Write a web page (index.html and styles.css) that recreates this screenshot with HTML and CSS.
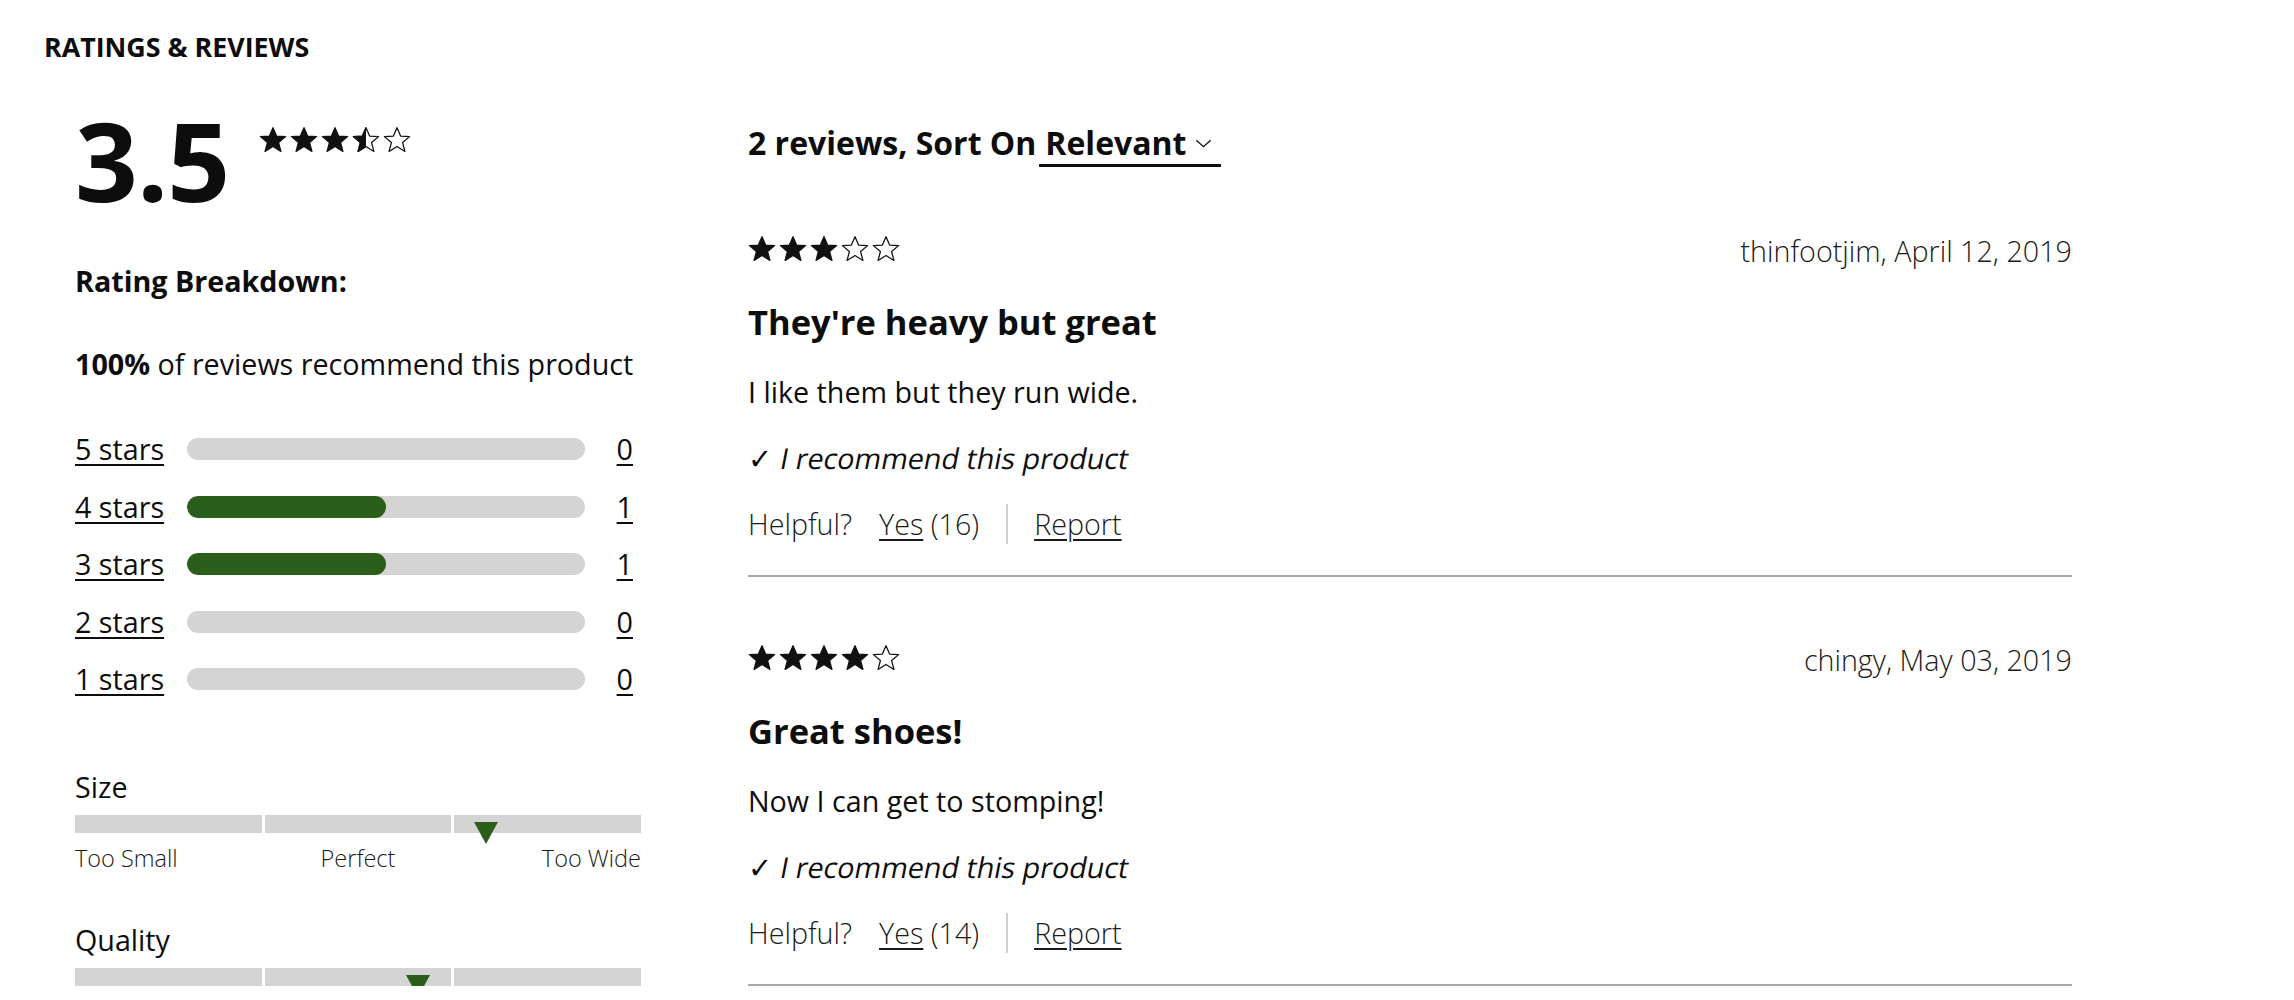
FILE: index.html
```html
<!DOCTYPE html>
<html lang="en">
<head>
<meta charset="utf-8">
<title>Ratings &amp; Reviews</title>
<link rel="stylesheet" href="styles.css">
</head>
<body>
<svg class="defs" width="0" height="0" aria-hidden="true">
  <defs>
    <clipPath id="half-left"><rect x="0" y="0" width="12" height="24"/></clipPath>
    <symbol id="star-full" viewBox="0 0 24 24">
      <polygon points="12,1.4 15.1,8.6 22.8,9.1 16.8,14.2 18.8,21.8 12,17.6 5.2,21.8 7.2,14.2 1.2,9.1 8.9,8.6" fill="#111" stroke="#111" stroke-width="1.1" stroke-linejoin="round"/>
    </symbol>
    <symbol id="star-empty" viewBox="0 0 24 24">
      <polygon points="12,1.4 15.1,8.6 22.8,9.1 16.8,14.2 18.8,21.8 12,17.6 5.2,21.8 7.2,14.2 1.2,9.1 8.9,8.6" fill="#fff" stroke="#111" stroke-width="1.1" stroke-linejoin="round"/>
    </symbol>
    <symbol id="star-half" viewBox="0 0 24 24">
      <polygon points="12,1.4 15.1,8.6 22.8,9.1 16.8,14.2 18.8,21.8 12,17.6 5.2,21.8 7.2,14.2 1.2,9.1 8.9,8.6" fill="#fff" stroke="#111" stroke-width="1.1" stroke-linejoin="round"/>
      <polygon clip-path="url(#half-left)" points="12,1.4 15.1,8.6 22.8,9.1 16.8,14.2 18.8,21.8 12,17.6 5.2,21.8 7.2,14.2 1.2,9.1 8.9,8.6" fill="#111" stroke="#111" stroke-width="1.1" stroke-linejoin="round"/>
    </symbol>
  </defs>
</svg>

<div class="page">
  <h2 class="section-title">RATINGS &amp; REVIEWS</h2>

  <div class="layout">
    <aside class="summary">
      <div class="score-row">
        <div class="score">3.5</div>
        <div class="stars">
          <svg class="star"><use href="#star-full"/></svg>
          <svg class="star"><use href="#star-full"/></svg>
          <svg class="star"><use href="#star-full"/></svg>
          <svg class="star"><use href="#star-half"/></svg>
          <svg class="star"><use href="#star-empty"/></svg>
        </div>
      </div>

      <h3 class="breakdown-title">Rating Breakdown:</h3>
      <p class="recommend-pct"><b>100%</b> of reviews recommend this product</p>

      <div class="dist">
        <div class="dist-row">
          <a class="dist-label" href="#">5 stars</a>
          <div class="track"><div class="fill" style="width:0%"></div></div>
          <a class="dist-count" href="#">0</a>
        </div>
        <div class="dist-row">
          <a class="dist-label" href="#">4 stars</a>
          <div class="track"><div class="fill" style="width:50%"></div></div>
          <a class="dist-count" href="#">1</a>
        </div>
        <div class="dist-row">
          <a class="dist-label" href="#">3 stars</a>
          <div class="track"><div class="fill" style="width:50%"></div></div>
          <a class="dist-count" href="#">1</a>
        </div>
        <div class="dist-row">
          <a class="dist-label" href="#">2 stars</a>
          <div class="track"><div class="fill" style="width:0%"></div></div>
          <a class="dist-count" href="#">0</a>
        </div>
        <div class="dist-row">
          <a class="dist-label" href="#">1 stars</a>
          <div class="track"><div class="fill" style="width:0%"></div></div>
          <a class="dist-count" href="#">0</a>
        </div>
      </div>

      <div class="char">
        <div class="char-name">Size</div>
        <div class="char-bar">
          <span class="seg"></span><span class="seg"></span><span class="seg"></span>
          <i class="marker" style="left:72.6%"></i>
        </div>
        <div class="char-labels"><span>Too Small</span><span>Perfect</span><span>Too Wide</span></div>
      </div>

      <div class="char">
        <div class="char-name">Quality</div>
        <div class="char-bar">
          <span class="seg"></span><span class="seg"></span><span class="seg"></span>
          <i class="marker" style="left:60.6%"></i>
        </div>
      </div>
    </aside>

    <section class="reviews">
      <div class="sort-header">
        <span class="sort-text">2 reviews, Sort On</span>
        <span class="sort-select">Relevant
          <svg class="chevron" viewBox="0 0 18 10"><polyline points="1,1.5 9,8.5 17,1.5" fill="none" stroke="#111" stroke-width="1.5"/></svg>
        </span>
      </div>

      <article class="review">
        <div class="review-top">
          <div class="stars">
            <svg class="star"><use href="#star-full"/></svg>
            <svg class="star"><use href="#star-full"/></svg>
            <svg class="star"><use href="#star-full"/></svg>
            <svg class="star"><use href="#star-empty"/></svg>
            <svg class="star"><use href="#star-empty"/></svg>
          </div>
          <div class="review-meta">thinfootjim, April 12, 2019</div>
        </div>
        <h4 class="review-title">They're heavy but great</h4>
        <p class="review-body">I like them but they run wide.</p>
        <p class="review-rec"><span class="check">✓</span> <span class="slant">I recommend this product</span></p>
        <div class="helpful">
          <span class="helpful-q">Helpful?</span>
          <span class="helpful-yes"><a href="#">Yes</a> (16)</span>
          <span class="helpful-sep"></span>
          <a class="helpful-report" href="#">Report</a>
        </div>
      </article>

      <article class="review">
        <div class="review-top">
          <div class="stars">
            <svg class="star"><use href="#star-full"/></svg>
            <svg class="star"><use href="#star-full"/></svg>
            <svg class="star"><use href="#star-full"/></svg>
            <svg class="star"><use href="#star-full"/></svg>
            <svg class="star"><use href="#star-empty"/></svg>
          </div>
          <div class="review-meta">chingy, May 03, 2019</div>
        </div>
        <h4 class="review-title">Great shoes!</h4>
        <p class="review-body">Now I can get to stomping!</p>
        <p class="review-rec"><span class="check">✓</span> <span class="slant">I recommend this product</span></p>
        <div class="helpful">
          <span class="helpful-q">Helpful?</span>
          <span class="helpful-yes"><a href="#">Yes</a> (14)</span>
          <span class="helpful-sep"></span>
          <a class="helpful-report" href="#">Report</a>
        </div>
      </article>
    </section>
  </div>
</div>
</body>
</html>
```

FILE: styles.css
```css
* { box-sizing: border-box; }

html, body {
  margin: 0;
  padding: 0;
  background: #fff;
}

body {
  font-family: "Open Sans", "Noto Sans", sans-serif;
  font-size: 28.7px;
  color: #0d0d0d;
}

.defs { position: absolute; width: 0; height: 0; overflow: hidden; }

a { color: #0d0d0d; text-decoration: underline; text-underline-offset: 4px; text-decoration-thickness: 2px; }

.page {
  padding: 29px 0 0 44px;
}

.section-title {
  margin: 0;
  font-size: 26.8px;
  line-height: 36px;
  font-weight: 700;
}

.layout {
  display: grid;
  grid-template-columns: 566px 1324px;
  column-gap: 107px;
  padding-left: 31px;
}

/* ---------- summary ---------- */
.score-row {
  display: flex;
  align-items: flex-start;
  margin-top: 39px;
}

.score {
  font-size: 110px;
  line-height: 110px;
  font-weight: 700;
  letter-spacing: -1px;
}

.stars {
  display: flex;
  gap: 3px;
}

.star {
  width: 28px;
  height: 28px;
  display: block;
}

.score-row .stars {
  margin-top: 22px;
  margin-left: 30px;
}

.breakdown-title {
  margin: 47px 0 0;
  font-size: 28.7px;
  line-height: 40px;
  font-weight: 700;
}

.recommend-pct {
  margin: 43px 0 0;
  line-height: 40px;
  font-weight: 400;
}

.recommend-pct b { font-weight: 700; }

.dist {
  margin-top: 45px;
  display: flex;
  flex-direction: column;
  gap: 17.5px;
}

.dist-row {
  display: grid;
  grid-template-columns: 112px 398px 48px;
  align-items: center;
  height: 40px;
}

.dist-label { line-height: 40px; }

.track {
  height: 22px;
  border-radius: 11px;
  background: #d4d4d4;
  overflow: hidden;
}

.fill {
  height: 100%;
  background: #2b5e1a;
  border-radius: 11px;
}

.dist-count {
  justify-self: end;
  line-height: 40px;
}

.char { margin-top: 68px; }
.char + .char { margin-top: 46px; }

.char-name {
  line-height: 40px;
  font-weight: 400;
}

.char-bar {
  position: relative;
  margin-top: 8px;
  display: grid;
  grid-template-columns: 1fr 1fr 1fr;
  column-gap: 3px;
  height: 18px;
}

.seg { background: #d4d4d4; }

.marker {
  position: absolute;
  top: 7px;
  width: 0;
  height: 0;
  margin-left: -12px;
  border-left: 12px solid transparent;
  border-right: 12px solid transparent;
  border-top: 22px solid #2b5e1a;
}

.char-labels {
  margin-top: 9px;
  display: grid;
  grid-template-columns: 1fr 1fr 1fr;
  font-size: 23.5px;
  line-height: 32px;
  font-weight: 300;
  color: #1a1a1a;
}

.char-labels span:nth-child(2) { justify-self: center; }
.char-labels span:nth-child(3) { justify-self: end; }

/* ---------- reviews ---------- */
.sort-header {
  margin-top: 57px;
  display: flex;
  align-items: baseline;
  gap: 3px;
  font-size: 32px;
  font-weight: 700;
  line-height: 42px;
}

.sort-select {
  display: inline-flex;
  align-items: center;
  gap: 9px;
  padding: 0 9px 0 6px;
  border-bottom: 3px solid #0d0d0d;
}

.chevron {
  width: 17px;
  height: 9px;
  display: block;
}

.review {
  padding: 61px 0 31px;
  border-bottom: 2px solid #a8a8a8;
}

.sort-header + .review { padding-top: 62px; }

.review-top {
  display: flex;
  justify-content: space-between;
  align-items: center;
  height: 40px;
}

.review-meta {
  font-weight: 300;
  color: #1a1a1a;
  line-height: 40px;
  padding-top: 4px;
}

.review-title {
  margin: 31px 0 0;
  font-size: 34.5px;
  line-height: 44px;
  font-weight: 700;
}

.review-body {
  margin: 28px 0 0;
  line-height: 40px;
  font-weight: 400;
}

.review-rec {
  margin: 26px 0 0;
  height: 40px;
  line-height: 40px;
  font-weight: 400;
}

.slant {
  display: inline-block;
  vertical-align: top;
  transform: skewX(-11deg);
  transform-origin: 0 75%;
}

.helpful {
  margin-top: 26px;
  display: flex;
  align-items: stretch;
  height: 40px;
  line-height: 40px;
  font-weight: 300;
  color: #1a1a1a;
}

.helpful a { font-weight: 300; color: #1a1a1a; }

.helpful-q { margin-right: 27px; }

.helpful-sep {
  width: 2px;
  background: #cfcfcf;
  margin: 0 26px 0 27px;
}
```
